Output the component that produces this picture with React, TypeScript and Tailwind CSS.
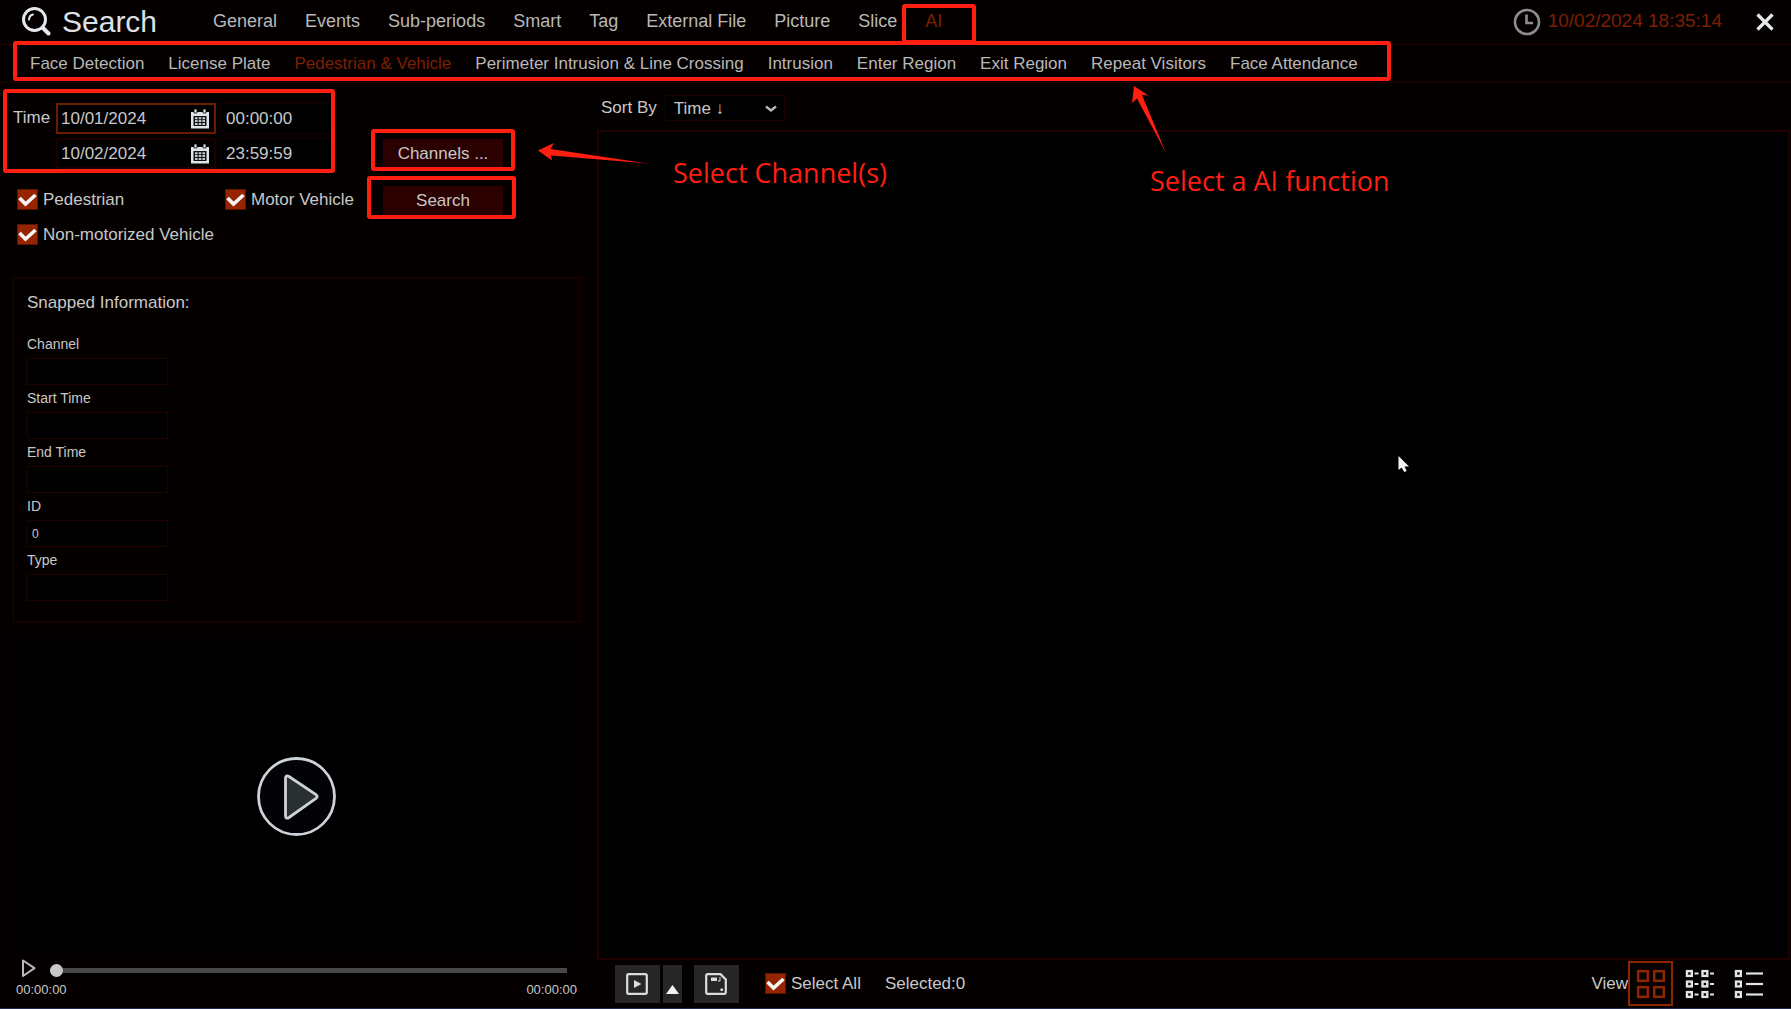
import { useState } from "react";
import type { ReactNode } from "react";

/* ========== Constants ========== */

const MAIN_TABS = ["General", "Events", "Sub-periods", "Smart", "Tag", "External File", "Picture", "Slice", "AI"];

const AI_TABS = [
  "Face Detection",
  "License Plate",
  "Pedestrian & Vehicle",
  "Perimeter Intrusion & Line Crossing",
  "Intrusion",
  "Enter Region",
  "Exit Region",
  "Repeat Visitors",
  "Face Attendance",
];

const TIME_ROWS = [
  { key: "start", label: "Start", date: "10/01/2024", time: "00:00:00", border: "border-[#6b1c00]" },
  { key: "end", label: "End", date: "10/02/2024", time: "23:59:59", border: "border-[#1c0000]" },
];

const SNAP_FIELDS = [
  { id: "channel", label: "Channel", value: "" },
  { id: "start-time", label: "Start Time", value: "" },
  { id: "end-time", label: "End Time", value: "" },
  { id: "snap-id", label: "ID", value: "0" },
  { id: "type", label: "Type", value: "" },
];

/* ========== Icons ========== */

function SearchIcon() {
  return (
    <svg className="h-[30px] w-[30px]" viewBox="0 0 30 30" fill="none" stroke="#e4e8ec" strokeLinecap="round">
      <circle cx="13.5" cy="12.5" r="11" strokeWidth="3" />
      <path d="M8 12.500a5.500 5.500 0 0 1 4-5" strokeWidth="2" />
      <path d="M22 21l5.500 5.500" strokeWidth="4" />
    </svg>
  );
}

function ClockIcon() {
  return (
    <svg className="h-7 w-7" viewBox="0 0 28 28" fill="none" stroke="#8c8c8c">
      <circle cx="14" cy="14" r="12" strokeWidth="2.6" />
      <path d="M13.5 6.5V15H20" strokeWidth="2.6" />
    </svg>
  );
}

function CalendarIcon() {
  return (
    <svg className="h-5 w-5" viewBox="0 0 20 20">
      <path d="M1 3h18v16.500H1z" fill="#dfe4e8" />
      <path d="M4 0h3v4H4zM13 0h3v4h-3z" fill="#dfe4e8" stroke="#000" strokeWidth="0.8" />
      <path d="M3.500 7h13v10h-13z" fill="#101214" />
      <path
        d="M5 8.200h2.600v2H5zM8.700 8.200h2.600v2H8.700zM12.400 8.200H15v2h-2.600zM5 11.100h2.600v2H5zM8.700 11.100h2.600v2H8.700zM12.400 11.100H15v2h-2.600zM5 14h2.600v2H5zM8.700 14h2.600v2H8.700zM12.400 14H15v2h-2.600z"
        fill="#c3c8cc"
      />
    </svg>
  );
}

function GridIcon() {
  return (
    <svg className="h-[30px] w-[30px]" viewBox="0 0 30 30" fill="none" stroke="#8c2400" strokeWidth="2.6">
      <rect x="2.200" y="2.200" width="9.600" height="9.600" />
      <rect x="18.200" y="2.200" width="9.600" height="9.600" />
      <rect x="2.200" y="18.200" width="9.600" height="9.600" />
      <rect x="18.200" y="18.200" width="9.600" height="9.600" />
    </svg>
  );
}

function DetailIcon() {
  return (
    <svg className="h-[30px] w-[30px]" viewBox="0 0 30 30" fill="none" stroke="#dfe4e8" strokeWidth="2.4">
      {[4.5, 15, 25.5].map((y) => (
        <g key={y}>
          <rect x="2" y={y - 2.4} width="4.800" height="4.800" />
          <path d={`M9.500 ${y}h4M25 ${y}h4`} strokeWidth="2" />
          <rect x="17.500" y={y - 2.4} width="4.800" height="4.800" />
        </g>
      ))}
    </svg>
  );
}

function ListIcon() {
  return (
    <svg className="h-[30px] w-[30px]" viewBox="0 0 30 30" fill="none" stroke="#dfe4e8" strokeWidth="2.4">
      {[4.5, 15, 25.5].map((y) => (
        <g key={y}>
          <rect x="2" y={y - 2.4} width="4.800" height="4.800" />
          <path d={`M12 ${y}h17`} strokeWidth="2.200" />
        </g>
      ))}
    </svg>
  );
}

/* ========== Shared controls ========== */

function Check({ id, children }: { id: string; children: ReactNode }) {
  return (
    <div className="flex h-[21px] items-center gap-[5px] text-[17px] whitespace-nowrap">
      <span className="relative h-[21px] w-[21px] shrink-0">
        <input
          id={id}
          type="checkbox"
          defaultChecked
          className="peer block h-full w-full appearance-none border border-[#5a1600] checked:bg-[#962400]"
        />
        <svg
          className="pointer-events-none absolute inset-0 hidden peer-checked:block"
          viewBox="0 0 21 21"
          fill="none"
          stroke="#f4f4f4"
          strokeWidth="3.6"
        >
          <path d="M2.500 9l6 6L18.500 6" />
        </svg>
      </span>
      <label htmlFor={id}>{children}</label>
    </div>
  );
}

/* ========== Header ========== */

function Header() {
  const [tab, setTab] = useState("AI");

  return (
    <header className="flex h-[45px] items-center border-b border-[#220000] pb-px">
      <div className="flex w-[213px] shrink-0 items-center gap-[11px] pl-[21px]">
        <SearchIcon />
        <h1 className="text-[30px] leading-[42px] text-[#dde1e5]">Search</h1>
      </div>
      <nav className="flex items-center gap-7 text-[18px] whitespace-nowrap">
        {MAIN_TABS.map((name) => (
          <button key={name} onClick={() => setTab(name)} className={name === tab ? "text-[#7d1f00]" : "text-[#b8b8b8]"}>
            {name}
          </button>
        ))}
      </nav>
      <div className="ml-auto flex items-center gap-[7px] pr-4">
        <ClockIcon />
        <time className="text-[19px] whitespace-nowrap text-[#7d1f00]">10/02/2024 18:35:14</time>
        <button aria-label="Close" className="ml-[26px]">
          <svg className="h-5 w-5" viewBox="0 0 20 20" fill="none" stroke="#e4e8ec" strokeWidth="3.2">
            <path d="M2.500 2.500l15 15M17.500 2.500l-15 15" />
          </svg>
        </button>
      </div>
    </header>
  );
}

function SubNav() {
  const [tab, setTab] = useState("Pedestrian & Vehicle");

  return (
    <nav className="flex h-[38px] items-center gap-6 border-b border-[#220000] pl-[30px] text-[17px] whitespace-nowrap">
      {AI_TABS.map((name) => (
        <button key={name} onClick={() => setTab(name)} className={name === tab ? "text-[#7d1f00]" : "text-[#b8b8b8]"}>
          {name}
        </button>
      ))}
    </nav>
  );
}

/* ========== Left column ========== */

function Filters() {
  return (
    <section className="flex">
      <div className="w-[370px] shrink-0">
        <div className="flex">
          <span className="w-[43px] text-[17px] leading-[30px]">Time</span>
          <div className="flex flex-col gap-1">
            {TIME_ROWS.map((row) => (
              <div key={row.key} className="flex gap-[5px]">
                <div className={`flex h-[31px] w-40 items-center border-2 bg-black pr-1 pl-[3px] ${row.border}`}>
                  <input
                    aria-label={`${row.label} date`}
                    defaultValue={row.date}
                    className="w-0 flex-1 bg-transparent text-[17px] outline-none"
                  />
                  <button aria-label={`Pick ${row.label.toLowerCase()} date`}>
                    <CalendarIcon />
                  </button>
                </div>
                <input
                  aria-label={`${row.label} time`}
                  defaultValue={row.time}
                  className="h-[31px] w-[112px] border border-[#140000] bg-black px-1 text-[17px] outline-none"
                />
              </div>
            ))}
          </div>
        </div>
        <div className="mt-5 ml-1 grid grid-cols-[208px_1fr] gap-y-[14px]">
          <Check id="pedestrian">Pedestrian</Check>
          <Check id="motor">Motor Vehicle</Check>
          <Check id="non-motor">Non-motorized Vehicle</Check>
        </div>
      </div>
      <div className="flex flex-col gap-[18px] pt-9">
        <button className="h-[29px] w-[120px] bg-[#2a0000] text-[17px] leading-6">Channels ...</button>
        <button className="h-[29px] w-[120px] bg-[#2a0000] text-[17px] leading-6">Search</button>
      </div>
    </section>
  );
}

function SnappedInfo() {
  return (
    <section className="mt-8 border border-[#220000] px-[13px] pt-[13px] pb-5">
      <h2 className="mb-4 text-[17px] leading-6">Snapped Information:</h2>
      {SNAP_FIELDS.map((f) => (
        <div key={f.id} className="flex flex-col">
          <label htmlFor={f.id} className="text-[14px] leading-[27px]">
            {f.label}
          </label>
          <input
            id={f.id}
            readOnly
            defaultValue={f.value}
            className="h-[27px] w-[141px] border border-[#220000] bg-black px-1 text-[12px] outline-none"
          />
        </div>
      ))}
    </section>
  );
}

function Player() {
  return (
    <>
      <div className="mt-4 flex flex-1 items-center justify-center bg-black">
        <button aria-label="Play video">
          <svg className="h-20 w-20" viewBox="0 0 80 80" fill="#030307" stroke="#ccd2d6" strokeWidth="2.800">
            <circle cx="39.500" cy="39.500" r="38" />
            <path d="M28.500 21.500q0-4 3.500-2l27 18.200q2.400 1.800 0 3.600L32 60.500q-3.500 2-3.500-2z" fill="#2a3030" />
          </svg>
        </button>
      </div>
      <div className="mt-1 flex h-[22px] items-center gap-[14px] pr-[14px] pl-2">
        <button aria-label="Play">
          <svg className="h-[22px] w-[15px]" viewBox="0 0 15 22" fill="none" stroke="#b8b8b8" strokeWidth="2" strokeLinejoin="round">
            <path d="M2 1.500v15.500L13.500 9.200z" />
          </svg>
        </button>
        <input
          type="range"
          aria-label="Position"
          defaultValue={0}
          className="h-3 min-w-0 flex-1 appearance-none bg-transparent [&::-webkit-slider-runnable-track]:h-[5px] [&::-webkit-slider-runnable-track]:bg-[#484848] [&::-webkit-slider-thumb]:mt-[-4px] [&::-webkit-slider-thumb]:h-[13px] [&::-webkit-slider-thumb]:w-[13px] [&::-webkit-slider-thumb]:appearance-none [&::-webkit-slider-thumb]:rounded-full [&::-webkit-slider-thumb]:bg-[#c8c8c8]"
        />
      </div>
      <div className="mb-[9px] flex justify-between pr-1 pl-[3px] text-[13px] leading-[18px]">
        <span>00:00:00</span>
        <span>00:00:00</span>
      </div>
    </>
  );
}

/* ========== Right column ========== */

function Results() {
  return (
    <section className="flex min-w-0 flex-1 flex-col">
      <div className="flex items-center gap-2 pt-3 pl-1 text-[17px]">
        <label htmlFor="sort" className="leading-[26px]">
          Sort By
        </label>
        <div className="relative">
          <select
            id="sort"
            className="block h-[26px] w-[120px] appearance-none border border-[#220000] bg-black pl-2 outline-none"
          >
            <option>Time ↓</option>
            <option>Time ↑</option>
          </select>
          <svg
            className="pointer-events-none absolute top-[10px] right-2 h-2 w-3"
            viewBox="0 0 12 8"
            fill="none"
            stroke="#b8b8b8"
            strokeWidth="2.400"
          >
            <path d="M1 1.500l5 4 5-4" />
          </svg>
        </div>
      </div>
      <div className="mt-[9px] mr-px flex-1 border-2 border-[#220000] bg-black" />
      <div className="flex h-12 items-center pr-5 pb-px pl-[18px] text-[17px] whitespace-nowrap">
        <button aria-label="Playback" className="flex h-[38px] w-[45px] items-center justify-center bg-[#262626]">
          <svg className="h-[22px] w-[22px]" viewBox="0 0 22 22" fill="none" stroke="#dcdcdc" strokeWidth="2.200">
            <rect x="1.200" y="1.200" width="19.600" height="19.600" rx="1.500" />
            <path d="M8 7v8l7.500-4z" fill="#dcdcdc" stroke="none" />
          </svg>
        </button>
        <button aria-label="More playback options" className="ml-[3px] flex h-[38px] w-[19px] items-end justify-center bg-[#262626] pb-[9px]">
          <svg className="h-[9px] w-[13px]" viewBox="0 0 13 9" fill="#f4f4f4">
            <path d="M6.500 0L13 9H0z" />
          </svg>
        </button>
        <button aria-label="Save" className="ml-3 flex h-[38px] w-[45px] items-center justify-center bg-[#262626]">
          <svg className="h-[22px] w-[22px]" viewBox="0 0 22 22" fill="none" stroke="#dcdcdc" strokeWidth="2.200">
            <path d="M2.500 1.200h13l5.300 5.300v13q0 1.300-1.300 1.300h-17q-1.300 0-1.300-1.300v-17q0-1.300 1.300-1.300z" />
            <path d="M6 4.500h6v3.500H6zM15.500 15.500h2.500v2.500h-2.500z" fill="#dcdcdc" stroke="none" />
            <path d="M15 4v4h-2" strokeWidth="1" />
          </svg>
        </button>
        <div className="ml-[26px]">
          <Check id="select-all">Select All</Check>
        </div>
        <span className="ml-6">Selected:0</span>
        <div className="ml-auto flex items-center">
          <span>View</span>
          <button aria-label="Grid view" className="flex h-[45px] w-[45px] items-center justify-center border-2 border-[#8c2400]">
            <GridIcon />
          </button>
          <button aria-label="Detail view" className="ml-1 flex h-[45px] w-[45px] items-center justify-center">
            <DetailIcon />
          </button>
          <button aria-label="List view" className="ml-1 flex h-[45px] w-[45px] items-center justify-center">
            <ListIcon />
          </button>
        </div>
      </div>
    </section>
  );
}

/* ========== Guide marks ========== */

/** Red frames, arrows and captions laid over the screen */
function GuideMarks() {
  return (
    <div className="pointer-events-none absolute inset-0 overflow-hidden font-['Open_Sans','Noto_Sans',sans-serif] text-[27px] leading-8 whitespace-nowrap text-[#ff1e10]">
      <div className="absolute top-1 left-[902px] h-10 w-[74px] rounded-[3px] border-4 border-[#ff1e10]" />
      <div className="absolute top-[41px] left-[13px] h-10 w-[1378px] rounded-[3px] border-4 border-[#ff1e10]" />
      <div className="absolute top-[89px] left-[3px] h-[84px] w-[332px] rounded-[3px] border-4 border-[#ff1e10]" />
      <div className="absolute top-[129px] left-[371px] h-[42px] w-36 rounded-[3px] border-4 border-[#ff1e10]" />
      <div className="absolute top-[176px] left-[367px] h-[43px] w-[149px] rounded-[3px] border-4 border-[#ff1e10]" />
      <svg className="absolute top-[142px] left-[537px] h-6 w-28" viewBox="0 0 112 24" fill="#ff1e10">
        <path d="M1 8.500L17 1l-3.500 6L111 21.500 14 13.500l1 5z" />
      </svg>
      <svg className="absolute top-[85px] left-[1131px] h-[70px] w-9" viewBox="0 0 36 70" fill="#ff1e10">
        <path d="M3 1l14.500 9.500-6.500-.5L35 68 6 13.500 1 18z" />
      </svg>
      <p className="absolute top-[157px] left-[673px]">Select Channel(s)</p>
      <p className="absolute top-[165px] left-[1150px]">Select a AI function</p>
      <svg className="absolute top-[455px] left-[1398px] h-[18px] w-3" viewBox="0 0 12 18" fill="#f4f4f4">
        <path d="M.5 1v14l3.200-2.500L6.200 17l2.500-1-2.200-4.500H11z" />
      </svg>
    </div>
  );
}

/* ========== Entry ========== */

export default function App() {
  return (
    <div className="relative flex min-h-screen flex-col border-b border-[#23284a] bg-[#040000] font-['Liberation_Sans',Arial,sans-serif] text-[#c8c8c8]">
      <Header />
      <SubNav />
      <main className="flex flex-1">
        <div className="flex w-1/3 shrink-0 flex-col pt-5 pr-4 pl-[13px]">
          <Filters />
          <SnappedInfo />
          <Player />
        </div>
        <Results />
      </main>
      <GuideMarks />
    </div>
  );
}
